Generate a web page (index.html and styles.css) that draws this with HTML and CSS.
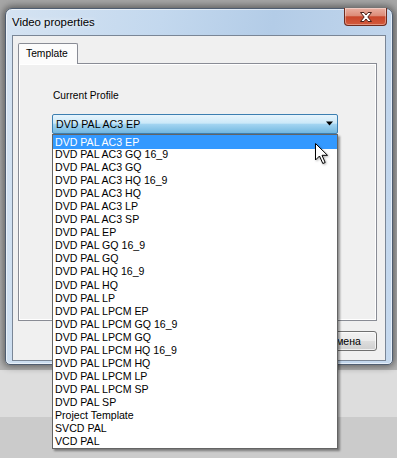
FILE: index.html
```html
<!DOCTYPE html>
<html>
<head>
<meta charset="utf-8">
<title>Video properties</title>
<link rel="stylesheet" href="styles.css">
</head>
<body>
<div class="desktop">
  <div class="bg-top"></div>
  <div class="bg-mid"></div>
  <div class="bg-bot"></div>

  <div class="window">
    <div class="titlebar">
      <span class="title">Video properties</span>
      <div class="close">
        <svg width="14" height="10" viewBox="0 0 14 10">
          <path d="M1.5 0.5 H5 L7 3 L9 0.5 H12.5 L8.8 5 L12.5 9.5 H9 L7 7 L5 9.5 H1.5 L5.2 5 Z" fill="#fff" stroke="#4a2018" stroke-width="1" stroke-linejoin="round"/>
        </svg>
      </div>
    </div>
    <div class="client">
      <div class="tabs">
        <div class="tab-strip"><div class="tab">Template</div></div>
        <div class="panel">
          <div class="label">Current Profile</div>
          <div class="combo">
            <span class="combo-text">DVD PAL AC3 EP</span>
            <svg class="combo-arrow" width="7" height="5" viewBox="0 0 7 5">
              <path d="M0 0.5 H7 L3.5 4.5 Z" fill="#000"/>
            </svg>
            <ul class="list">
              <li class="item selected">DVD PAL AC3 EP</li>
              <li class="item">DVD PAL AC3 GQ 16_9</li>
              <li class="item">DVD PAL AC3 GQ</li>
              <li class="item">DVD PAL AC3 HQ 16_9</li>
              <li class="item">DVD PAL AC3 HQ</li>
              <li class="item">DVD PAL AC3 LP</li>
              <li class="item">DVD PAL AC3 SP</li>
              <li class="item">DVD PAL EP</li>
              <li class="item">DVD PAL GQ 16_9</li>
              <li class="item">DVD PAL GQ</li>
              <li class="item">DVD PAL HQ 16_9</li>
              <li class="item">DVD PAL HQ</li>
              <li class="item">DVD PAL LP</li>
              <li class="item">DVD PAL LPCM EP</li>
              <li class="item">DVD PAL LPCM GQ 16_9</li>
              <li class="item">DVD PAL LPCM GQ</li>
              <li class="item">DVD PAL LPCM HQ 16_9</li>
              <li class="item">DVD PAL LPCM HQ</li>
              <li class="item">DVD PAL LPCM LP</li>
              <li class="item">DVD PAL LPCM SP</li>
              <li class="item">DVD PAL SP</li>
              <li class="item">Project Template</li>
              <li class="item">SVCD PAL</li>
              <li class="item">VCD PAL</li>
            </ul>
          </div>
        </div>
      </div>
      <div class="buttons">
        <button class="btn">Отмена</button>
      </div>
    </div>
  </div>

  <svg class="cursor" width="14" height="22" viewBox="0 0 14 22">
    <path d="M0.5 0.5 V17 L4.5 13 L7.8 20.5 L10.2 19.5 L7 12.3 H12.5 Z" fill="#fff" stroke="#000" stroke-width="1" stroke-linejoin="miter"/>
  </svg>
</div>
</body>
</html>
```

FILE: styles.css
```css
* { box-sizing: border-box; }
html, body { margin: 0; padding: 0; }
body {
  width: 397px;
  height: 458px;
  overflow: hidden;
  font-family: "Liberation Sans", Arial, sans-serif;
  background: #cbcbcb;
}
.desktop { position: relative; width: 397px; height: 458px; }
.bg-top { height: 370px; background: linear-gradient(#a6a6a6, #b4b4b4); }
.bg-mid { height: 47px; background: #dddddd; }
.bg-bot { height: 41px; background: #cbcbcb; }

.window {
  position: absolute;
  left: 5px;
  top: 8px;
  width: 388px;
  height: 357px;
  border: 1px solid #4f5d70;
  border-radius: 7px 7px 5px 5px;
  background: linear-gradient(100deg, #d5e3f2 0%, #c3d8ee 35%, #b3cce7 60%, #c6d9ee 100%);
  box-shadow: 0 0 7px 2px rgba(0, 0, 0, 0.45), inset 0 0 0 1px rgba(255, 255, 255, 0.55);
  padding: 0 6px 3px 6px;
  display: flex;
  flex-direction: column;
}
.titlebar {
  height: 26px;
  flex: none;
  display: flex;
  align-items: center;
}
.title {
  font-size: 11.4px;
  color: #000;
  text-shadow: 0 0 5px rgba(255, 255, 255, 0.9);
}
.close {
  margin-left: auto;
  align-self: flex-start;
  margin-top: -1px;
  margin-right: -1px;
  width: 43px;
  height: 18px;
  border: 1px solid #6e2b1e;
  border-top: none;
  border-radius: 0 0 4px 4px;
  background: linear-gradient(#eab0a2 0%, #dd8c78 45%, #c9462b 52%, #d35a3c 100%);
  box-shadow: inset 0 0 0 1px rgba(255, 255, 255, 0.35);
  display: flex;
  align-items: center;
  justify-content: center;
}

.client {
  flex: 1;
  background: #f0f0f0;
  border: 1px solid #7a8696;
  display: flex;
  flex-direction: column;
  padding: 7px 0 0 5px;
}
.tab-strip { display: flex; }
.tab {
  position: relative;
  z-index: 1;
  width: 60px;
  height: 21px;
  margin-bottom: -1px;
  border: 1px solid #898c95;
  border-bottom: none;
  border-radius: 2px 2px 0 0;
  background: #fcfcfc;
  font-size: 10.3px;
  line-height: 19px;
  padding-left: 7px;
  color: #000;
}
.panel {
  width: 359px;
  height: 258px;
  border: 1px solid #898c95;
  background: #f0f0f0;
  box-shadow: inset 1px 1px 0 #fff, inset -1px -1px 0 #fff;
  padding: 25px 0 0 33px;
}
.label {
  font-size: 10.2px;
  line-height: 13px;
  padding-left: 1px;
  color: #000;
}
.combo {
  position: relative;
  margin-top: 12px;
  width: 286px;
  height: 20px;
  border: 1px solid #3c7fb1;
  border-radius: 2px;
  background: linear-gradient(#e8f5fd 0%, #cbe8f8 45%, #a2d4f1 52%, #72b7e0 100%);
  display: flex;
  align-items: center;
  padding: 0 4px 0 3px;
}
.combo-text {
  font-size: 10.6px;
  color: #000;
  white-space: nowrap;
}
.combo-arrow { margin-left: auto; margin-top: -2px; }

.list {
  position: absolute;
  z-index: 5;
  top: 19px;
  left: -1px;
  width: 286px;
  margin: 0;
  padding: 0;
  list-style: none;
  background: #fff;
  border: 1px solid #646464;
  box-shadow: 2px 2px 2px rgba(0, 0, 0, 0.4);
}
.item {
  height: 13.05px;
  line-height: 13.05px;
  padding-left: 2px;
  font-size: 10.6px;
  color: #000;
  white-space: nowrap;
}
.item.selected { background: #3399ff; color: #fff; height: 14px; line-height: 14px; margin-bottom: -0.95px; }

.buttons {
  display: flex;
  justify-content: flex-end;
  padding-right: 8px;
  margin-top: 10px;
}
.btn {
  width: 70px;
  height: 20px;
  padding: 0;
  border: 1px solid #707070;
  border-radius: 3px;
  background: linear-gradient(#f2f2f2 0%, #ebebeb 50%, #dddddd 52%, #cfcfcf 100%);
  box-shadow: inset 0 0 0 1px rgba(255, 255, 255, 0.7);
  font-family: "Liberation Sans", Arial, sans-serif;
  font-size: 10.5px;
  color: #000;
}

.cursor {
  position: absolute;
  left: 314.5px;
  top: 142.5px;
  z-index: 10;
  filter: drop-shadow(1px 1px 1px rgba(0, 0, 0, 0.3));
}
```
